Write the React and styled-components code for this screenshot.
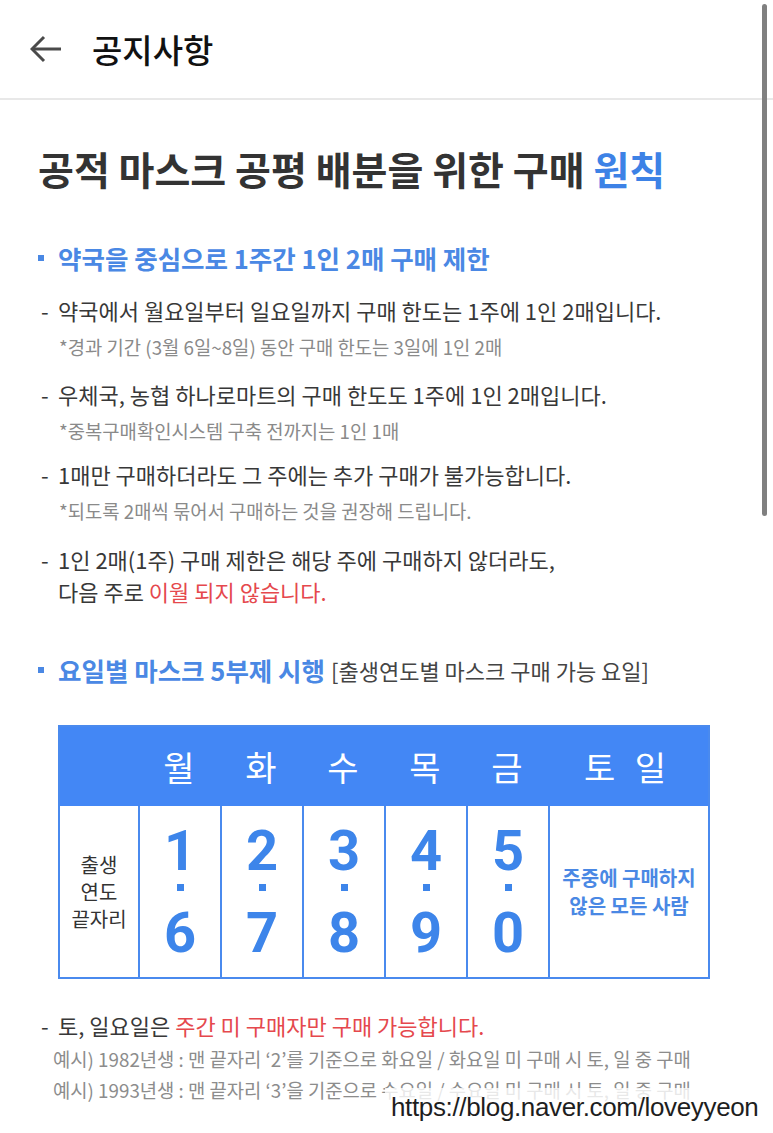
import React from "react";
import styled, { createGlobalStyle } from "styled-components";

const GlobalStyle = createGlobalStyle`
  html, body {
    margin: 0;
    padding: 0;
    background: #fff;
  }
  body {
    font-family: "Noto Sans CJK KR", "Noto Sans", sans-serif;
    overflow: hidden;
  }
`;

const Page = styled.div`
  position: relative;
  width: 773px;
  height: 1133px;
  overflow: hidden;
  background: #fff;
`;

const Header = styled.header`
  height: 98px;
  border-bottom: 2px solid #e8e8e8;
  display: flex;
  align-items: center;
  padding-left: 30px;
  gap: 30px;
`;

const HeaderTitle = styled.div`
  font-size: 33px;
  font-weight: 500;
  color: #111;
`;

const Scrollbar = styled.div`
  position: absolute;
  top: 4px;
  right: 6px;
  width: 5px;
  height: 512px;
  border-radius: 3px;
  background: #808080;
`;

const Content = styled.main`
  padding-left: 38px;
`;

const MainTitle = styled.h1`
  margin: 45px 0 0;
  font-size: 39px;
  line-height: 46px;
  font-weight: 700;
  color: #333;
`;

const Blue = styled.span`
  color: #3d82e6;
`;

const Red = styled.span`
  color: #e5484d;
`;

const SectionHead = styled.h2`
  margin: ${(p) => p.$mt}px 0 0;
  display: flex;
  align-items: center;
  font-size: 25.5px;
  line-height: 32px;
  font-weight: 700;
  color: #4a88e4;

  &::before {
    content: "";
    width: 6px;
    height: 6px;
    margin-right: 14px;
    background: #4a88e4;
    flex: none;
  }
`;

const HeadNote = styled.span`
  margin-left: 6px;
  font-size: 22px;
  font-weight: 400;
  color: #444;
`;

const ItemBlock = styled.div`
  margin-top: ${(p) => p.$mt}px;
`;

const Line = styled.div`
  display: flex;
  font-size: 22px;
  line-height: 32px;
  color: #383838;
`;

const Dash = styled.span`
  flex: none;
  width: 17px;
  padding-left: 3px;
`;

const Note = styled.div`
  margin: 9px 0 0 21px;
  font-size: 18.8px;
  line-height: 24px;
  color: #8a8a8a;
`;

const Example = styled.div`
  margin-top: ${(p) => p.$mt || 0}px;
  padding-left: 15px;
  font-size: 18.8px;
  line-height: 31px;
  color: #8c8c8c;
`;

const Table = styled.div`
  margin: 39px 0 0 20px;
  width: 652px;
  box-sizing: border-box;
  border: 2px solid #4a8aee;
`;

const Row = styled.div`
  display: grid;
  grid-template-columns: 78px repeat(5, 1fr) 160px;
  height: ${(p) => p.$h}px;
  background: ${(p) => p.$bg || "#fff"};
`;

const HeadCell = styled.div`
  display: flex;
  align-items: center;
  justify-content: center;
  font-size: 34px;
  font-weight: 400;
  color: #fff;
  letter-spacing: ${(p) => (p.$wide ? "6px" : "0")};
`;

const Cell = styled.div`
  display: flex;
  flex-direction: column;
  align-items: center;
  justify-content: center;
  border-left: ${(p) => (p.$first ? "none" : "2px solid #4a8aee")};
  text-align: center;
`;

const Label = styled.div`
  font-size: 20px;
  line-height: 27px;
  color: #333;
`;

const Digit = styled.div`
  font-family: Roboto, "Noto Sans", sans-serif;
  font-size: 56px;
  line-height: 44px;
  height: 44px;
  font-weight: 700;
  color: #3d85ea;
`;

const Dot = styled.div`
  width: 7px;
  height: 7px;
  margin: 11px 0 20px;
  background: #3d85ea;
`;

const Everyone = styled.div`
  font-size: 20px;
  line-height: 28px;
  font-weight: 700;
  color: #4a88e4;
`;

const Watermark = styled.div`
  position: absolute;
  left: 385px;
  top: 1088px;
  width: 380px;
  height: 38px;
  padding-left: 6px;
  box-sizing: border-box;
  display: flex;
  align-items: center;
  background: rgba(255, 255, 255, 0.8);
  font-family: "Liberation Sans", Arial, sans-serif;
  font-size: 26px;
  letter-spacing: -0.35px;
  color: #1e1e1e;
`;

const BackArrow = () => (
  <svg width="32" height="28" viewBox="0 0 32 28" fill="none">
    <path d="M2 14H31" stroke="#4a4a4a" strokeWidth="3" />
    <path d="M14 2L2 14L14 26" stroke="#4a4a4a" strokeWidth="3" />
  </svg>
);

const Item = ({ mt, note, children }) => (
  <ItemBlock $mt={mt}>
    <Line>
      <Dash>-</Dash>
      <div>{children}</div>
    </Line>
    {note && <Note>{note}</Note>}
  </ItemBlock>
);

const days = ["월", "화", "수", "목", "금"];
const pairs = [
  ["1", "6"],
  ["2", "7"],
  ["3", "8"],
  ["4", "9"],
  ["5", "0"],
];

export default function App() {
  return (
    <Page>
      <GlobalStyle />
      <Header>
        <BackArrow />
        <HeaderTitle>공지사항</HeaderTitle>
      </Header>
      <Scrollbar />
      <Content>
        <MainTitle>
          공적 마스크 공평 배분을 위한 구매 <Blue>원칙</Blue>
        </MainTitle>

        <SectionHead $mt={51}>약국을 중심으로 1주간 1인 2매 구매 제한</SectionHead>

        <Item mt={20} note="*경과 기간 (3월 6일~8일) 동안 구매 한도는 3일에 1인 2매">
          약국에서 월요일부터 일요일까지 구매 한도는 1주에 1인 2매입니다.
        </Item>
        <Item mt={19} note="*중복구매확인시스템 구축 전까지는 1인 1매">
          우체국, 농협 하나로마트의 구매 한도도 1주에 1인 2매입니다.
        </Item>
        <Item mt={15} note="*되도록 2매씩 묶어서 구매하는 것을 권장해 드립니다.">
          1매만 구매하더라도 그 주에는 추가 구매가 불가능합니다.
        </Item>
        <Item mt={20}>
          1인 2매(1주) 구매 제한은 해당 주에 구매하지 않더라도,
          <br />
          다음 주로 <Red>이월 되지 않습니다.</Red>
        </Item>

        <SectionHead $mt={47}>
          요일별 마스크 5부제 시행
          <HeadNote>[출생연도별 마스크 구매 가능 요일]</HeadNote>
        </SectionHead>

        <Table>
          <Row $h={79} $bg="#4387f5">
            <HeadCell />
            {days.map((d) => (
              <HeadCell key={d}>{d}</HeadCell>
            ))}
            <HeadCell $wide>토 일</HeadCell>
          </Row>
          <Row $h={171}>
            <Cell $first>
              <Label>출생</Label>
              <Label>연도</Label>
              <Label>끝자리</Label>
            </Cell>
            {pairs.map(([a, b]) => (
              <Cell key={a}>
                <Digit>{a}</Digit>
                <Dot />
                <Digit>{b}</Digit>
              </Cell>
            ))}
            <Cell>
              <Everyone>주중에 구매하지</Everyone>
              <Everyone>않은 모든 사람</Everyone>
            </Cell>
          </Row>
        </Table>

        <Item mt={30}>
          토, 일요일은 <Red>주간 미 구매자만 구매 가능합니다.</Red>
        </Item>
        <Example $mt={2}>예시) 1982년생 : 맨 끝자리 ‘2’를 기준으로 화요일 / 화요일 미 구매 시 토, 일 중 구매</Example>
        <Example>예시) 1993년생 : 맨 끝자리 ‘3’을 기준으로 수요일 / 수요일 미 구매 시 토, 일 중 구매</Example>
      </Content>
      <Watermark>https://blog.naver.com/loveyyeon</Watermark>
    </Page>
  );
}
